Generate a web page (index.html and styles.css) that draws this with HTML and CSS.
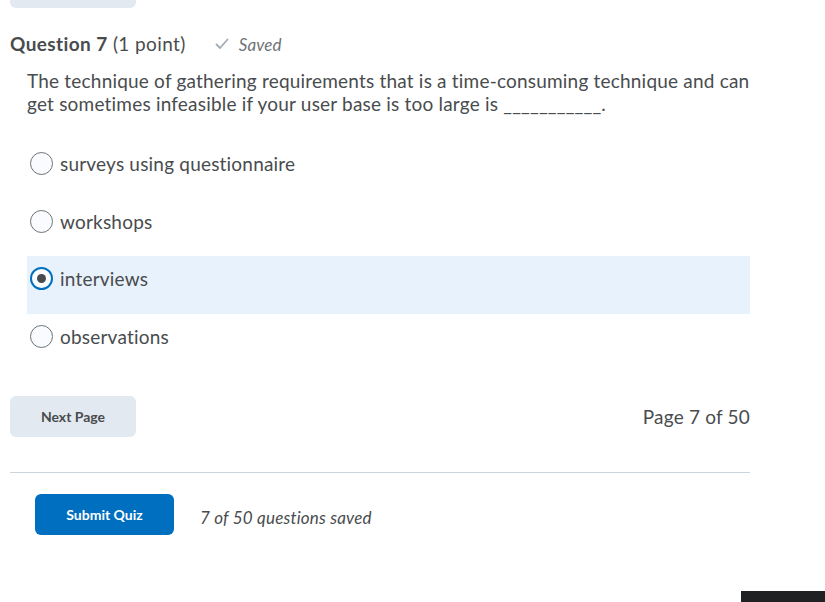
FILE: index.html
```html
<!DOCTYPE html>
<html>
<head>
<meta charset="utf-8">
<link rel="stylesheet" href="styles.css">
</head>
<body>
<div class="page">
  <div class="prev-btn"></div>
  <div class="q-head">
    <h2 class="q-title"><strong>Question 7</strong> <span class="pts">(1 point)</span></h2>
    <span class="saved">
      <svg class="check" width="14" height="12" viewBox="0 0 14 12"><path d="M1.5 6.5 L5 10 L12.5 1.5" fill="none" stroke="#a4acb3" stroke-width="1.8" stroke-linecap="round" stroke-linejoin="round"/></svg>
      <em>Saved</em>
    </span>
  </div>
  <div class="q-body">
    <p class="q-text">The technique of gathering requirements that is a time-consuming technique and can get sometimes infeasible if your user base is too large is ___________.</p>
    <div class="options">
      <label class="opt"><span class="radio"></span><span>surveys using questionnaire</span></label>
      <label class="opt"><span class="radio"></span><span>workshops</span></label>
      <label class="opt selected"><span class="radio checked"></span><span>interviews</span></label>
      <label class="opt"><span class="radio"></span><span>observations</span></label>
    </div>
  </div>
  <div class="pager">
    <button class="btn btn-secondary">Next Page</button>
    <span class="page-num">Page 7 of 50</span>
  </div>
  <hr class="sep">
  <div class="submit-row">
    <button class="btn btn-primary">Submit Quiz</button>
    <em class="saved-count">7 of 50 questions saved</em>
  </div>
</div>
<div class="corner"></div>
</body>
</html>
```

FILE: styles.css
```css
html, body {
  margin: 0;
  padding: 0;
  background: #fff;
  font-family: Lato, "Noto Sans", sans-serif;
  color: #494c4e;
  overflow: hidden;
  height: 602px;
  font-variant-ligatures: none;
}
.page {
  width: 740px;
  padding-left: 10px;
}
.prev-btn {
  width: 126px;
  height: 8px;
  background: #e3e9f1;
  border-radius: 0 0 6px 6px;
}
.q-head {
  display: flex;
  align-items: center;
  margin-top: 24px;
  height: 24px;
}
.q-title {
  margin: 0;
  font-size: 19px;
  letter-spacing: 0.4px;
  font-weight: 400;
  line-height: 24px;
}
.q-title strong { font-weight: 700; }
.saved {
  display: flex;
  align-items: center;
  margin-left: 29px;
  color: #6e7376;
  font-size: 17px;
  letter-spacing: 0.1px;
}
.check { margin-right: 10px; }
.q-body {
  padding-left: 17px;
}
.q-text {
  margin: 13px 0 0;
  font-size: 19px;
  letter-spacing: 0.2px;
  line-height: 23px;
}
.options {
  margin-top: 26px;
  display: flex;
  flex-direction: column;
}
.opt {
  display: flex;
  align-items: center;
  box-sizing: border-box;
  height: 57.5px;
  padding: 0 0 12px 3px;
  font-size: 19px;
  letter-spacing: 0.2px;
}
.opt.selected { background: #e8f2fc; }
.radio {
  width: 21px;
  height: 21px;
  border: 1px solid #6e7376;
  border-radius: 50%;
  background: #f9fbff;
  margin-right: 7px;
  box-sizing: content-box;
  position: relative;
}
.radio.checked {
  width: 19px;
  height: 19px;
  border: 2px solid #006fbf;
  background: #fff;
}
.radio.checked::after {
  content: "";
  position: absolute;
  left: 5px;
  top: 5px;
  width: 9px;
  height: 9px;
  border-radius: 50%;
  background: #494c4e;
}
.pager {
  display: flex;
  justify-content: space-between;
  align-items: center;
  margin-top: 25px;
}
.btn {
  font-family: Lato, "Noto Sans", sans-serif;
  font-size: 14px;
  font-weight: 700;
  border: none;
  border-radius: 6px;
  height: 41px;
  cursor: pointer;
}
.btn-secondary {
  width: 126px;
  background: #e3e9f1;
  color: #494c4e;
}
.page-num {
  font-size: 19px;
  letter-spacing: 0.2px;
}
.sep {
  border: none;
  border-top: 1px solid #cdd5dc;
  margin: 35px 0 0;
}
.submit-row {
  display: flex;
  align-items: center;
  margin-top: 21px;
  padding-left: 25px;
}
.btn-primary {
  width: 139px;
  background: #006fbf;
  color: #fff;
}
.saved-count {
  margin-left: 26px;
  padding-top: 5px;
  font-size: 17px;
  letter-spacing: 0.2px;
  color: #494c4e;
}
.corner {
  position: fixed;
  right: 0;
  bottom: 0;
  width: 84px;
  height: 11px;
  background: #202122;
}
```
